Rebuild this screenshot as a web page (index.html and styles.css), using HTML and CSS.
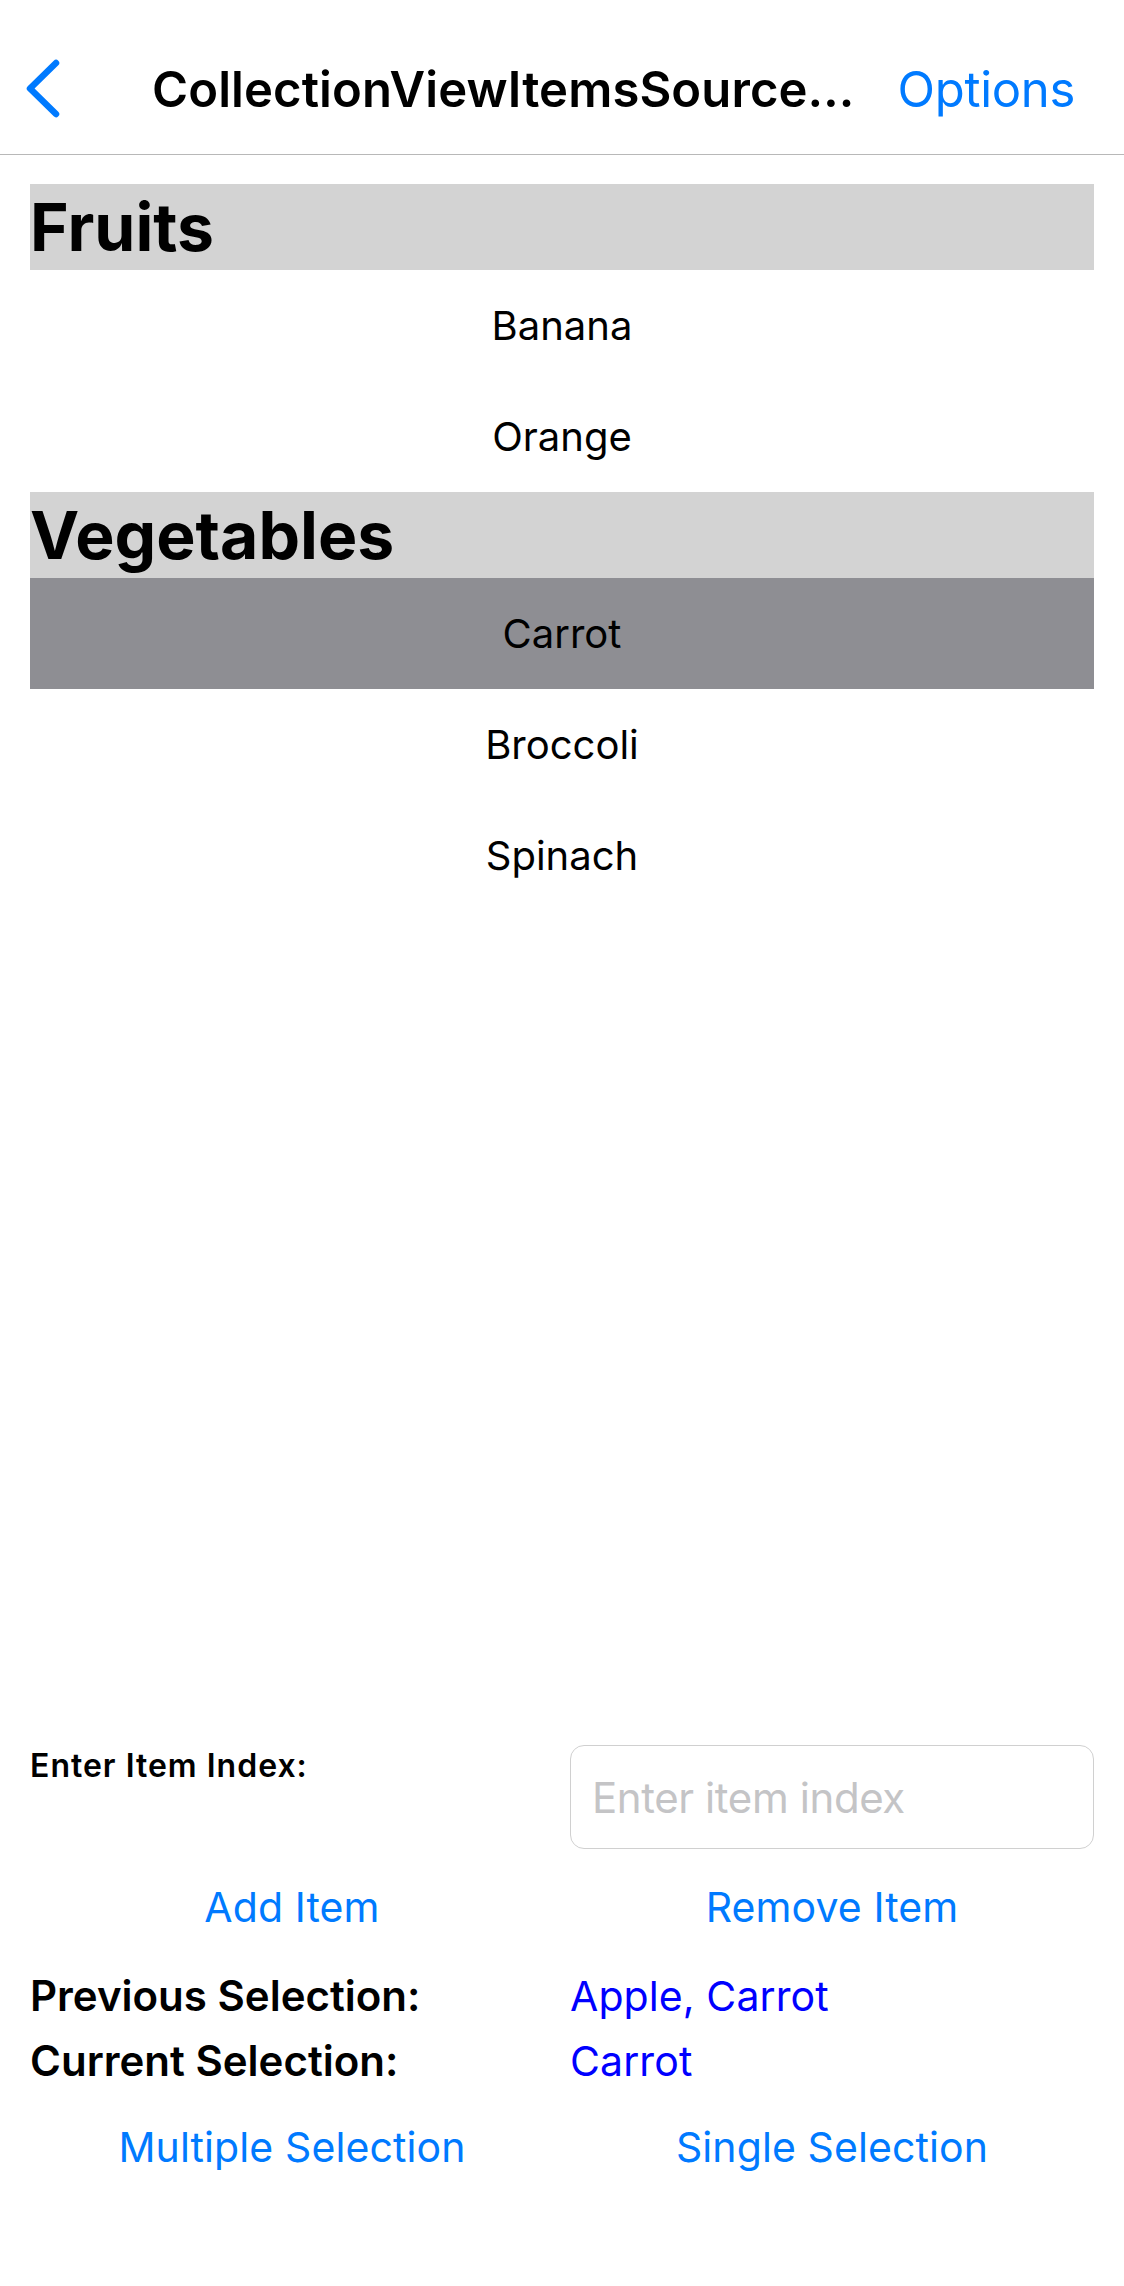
FILE: index.html
```html
<!DOCTYPE html>
<html lang="en">
<head>
<meta charset="utf-8">
<title>CollectionViewItemsSource</title>
<link rel="stylesheet" href="styles.css">
</head>
<body>
<div class="screen">
  <header class="nav">
    <div class="nav-back">
      <svg class="chevron" width="40" height="60" viewBox="0 0 40 60" aria-hidden="true">
        <polyline points="32,4 6,29.5 32,55" fill="none" stroke="#007aff" stroke-width="6.5" stroke-linecap="round" stroke-linejoin="round"/>
      </svg>
    </div>
    <div class="nav-title">CollectionViewItemsSource…</div>
    <div class="nav-action">Options</div>
  </header>

  <main class="list">
    <div class="group-header">Fruits</div>
    <div class="item">Banana</div>
    <div class="item">Orange</div>
    <div class="group-header">Vegetables</div>
    <div class="item item-selected">Carrot</div>
    <div class="item">Broccoli</div>
    <div class="item">Spinach</div>
  </main>

  <section class="controls">
    <div class="row row-entry">
      <div class="entry-label">Enter Item Index:</div>
      <div class="entry-box"><span class="placeholder">Enter item index</span></div>
    </div>
    <div class="row row-buttons">
      <div class="btn">Add Item</div>
      <div class="btn">Remove Item</div>
    </div>
    <div class="row row-info row-prev">
      <div class="info-label">Previous Selection:</div>
      <div class="info-value">Apple, Carrot</div>
    </div>
    <div class="row row-info">
      <div class="info-label">Current Selection:</div>
      <div class="info-value">Carrot</div>
    </div>
    <div class="row row-buttons row-mode">
      <div class="btn">Multiple Selection</div>
      <div class="btn">Single Selection</div>
    </div>
  </section>
</div>
</body>
</html>
```

FILE: styles.css
```css
* { box-sizing: border-box; }

html, body {
  margin: 0;
  padding: 0;
  background: #ffffff;
}

body {
  font-family: "Inter", "Roboto", "Liberation Sans", sans-serif;
  color: #000000;
}

.screen {
  height: 2286px;
  display: flex;
  flex-direction: column;
}

/* Navigation bar */
.nav {
  height: 155px;
  padding-top: 24px;
  display: flex;
  align-items: center;
  border-bottom: 1px solid #b8b8b8;
  flex: none;
}

.nav-back {
  width: 152px;
  padding-left: 24px;
  display: flex;
  align-items: center;
}

.chevron { display: block; }

.nav-title {
  font-size: 49px;
  font-weight: 600;
  letter-spacing: 0.1px;
  white-space: nowrap;
}

.nav-action {
  margin-left: auto;
  padding-right: 49px;
  font-size: 49px;
  color: #007aff;
  letter-spacing: -0.3px;
}

/* List */
.list {
  flex: 1;
  padding: 29px 30px 0;
}

.group-header {
  height: 86px;
  line-height: 86px;
  background: #d3d3d3;
  font-size: 66px;
  font-weight: 700;
  letter-spacing: 0;
}

.item {
  height: 111px;
  display: flex;
  align-items: center;
  justify-content: center;
  font-size: 40px;
  letter-spacing: 0;
}

.item-selected {
  background: #8e8e93;
}

/* Controls */
.controls {
  flex: none;
  padding: 0 30px 99px;
}

.row {
  display: grid;
  grid-template-columns: 1fr 1fr;
  column-gap: 16px;
}

.row-entry {
  align-items: start;
}

.entry-label {
  padding-top: 1px;
  font-size: 32px;
  font-weight: 600;
  letter-spacing: 1px;
}

.entry-box {
  height: 104px;
  border: 1.5px solid #d0d0d0;
  border-radius: 14px;
  display: flex;
  align-items: center;
  padding-left: 21px;
}

.placeholder {
  font-size: 42px;
  color: #c4c4c6;
  letter-spacing: -0.4px;
}

.row-buttons {
  height: 80px;
  margin-top: 18px;
  align-items: center;
}

.btn {
  text-align: center;
  font-size: 41px;
  color: #007aff;
  letter-spacing: 0.1px;
}

.row-info {
  height: 50px;
  align-items: center;
}

.row-prev {
  margin-top: 23px;
  margin-bottom: 15px;
}

.info-label {
  font-size: 42px;
  font-weight: 600;
  letter-spacing: 0;
}

.info-value {
  font-size: 41px;
  color: #0000ff;
  letter-spacing: 0.1px;
}

.row-mode {
  margin-top: 22px;
}
```
